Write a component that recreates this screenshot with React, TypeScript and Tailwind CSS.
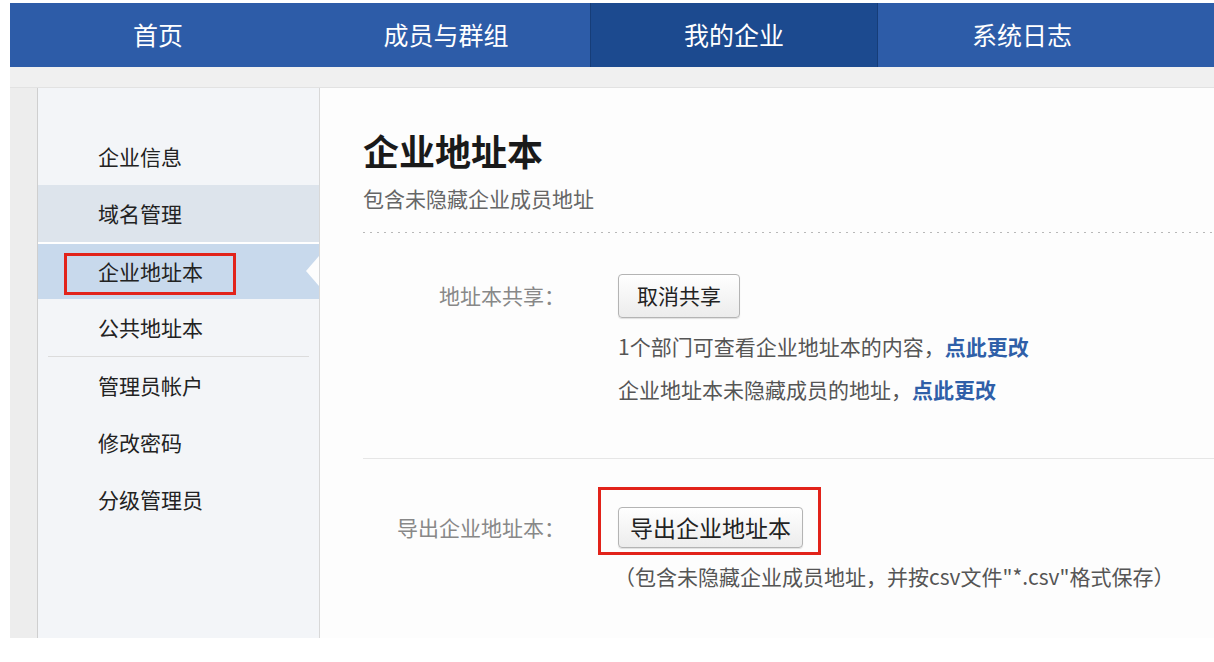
import React from "react"

const font = { fontFamily: '"Noto Sans CJK SC", "Noto Sans", sans-serif' }

const tabs = ["首页", "成员与群组", "我的企业", "系统日志"]

function SideItem({
    label,
    variant,
}: {
    label: string
    variant?: "hover" | "active"
}) {
    if (variant === "active") {
        return (
            <div className="relative h-[55px] flex items-center pl-[60px] bg-[#c8d9ec] text-[21px] text-[#222]">
                {label}
                {/* red annotation box */}
                <div className="absolute left-[26px] top-[9px] w-[172px] h-[42px] border-[3px] border-[#e2231a]" />
                {/* notch */}
                <div className="absolute right-0 top-[12px] w-0 h-0 border-y-[15px] border-y-transparent border-r-[13px] border-r-[#fdfdfd]" />
            </div>
        )
    }
    return (
        <div
            className={`h-[57px] flex items-center pl-[60px] text-[21px] text-[#222] ${
                variant === "hover" ? "bg-[#dde4ec]" : ""
            }`}
        >
            {label}
        </div>
    )
}

function Button({ children, size }: { children: React.ReactNode; size: "sm" | "lg" }) {
    return (
        <button
            className={`rounded-[4px] border border-[#b4b4b4] bg-[linear-gradient(#ffffff,#ececec)] shadow-[0_1px_1px_rgba(0,0,0,0.12)] text-[#222] flex items-center justify-center ${
                size === "sm" ? "w-[122px] h-[44px] text-[21px]" : "w-[185px] h-[41px] text-[23px]"
            }`}
        >
            {children}
        </button>
    )
}

export default function App() {
    return (
        <div className="w-[1214px] h-[662px] bg-white pl-[10px] overflow-hidden" style={font}>
            <div className="h-[3px] bg-white" />
            <div className="flex flex-col bg-[#ededed] h-[635px]">
                {/* top nav */}
                <div className="h-[64px] bg-[#2d5ca8] flex pl-[4px]">
                    {tabs.map((t, i) => (
                        <div
                            key={t}
                            className={`w-[288px] flex items-center justify-center text-[25px] text-white ${
                                i === 2 ? "bg-[#1c4a8f] border-x border-[#163d78]" : ""
                            }`}
                        >
                            {t}
                        </div>
                    ))}
                </div>
                <div className="h-[21px] bg-[#f0f0f0] border-b border-[#e2e2e2]" />

                <div className="flex flex-1 pl-[27px]">
                    {/* sidebar */}
                    <div className="w-[283px] bg-[#f3f5f8] border-l border-[#cfcfcf] border-r border-r-[#d8d8d8] pt-[40px] flex flex-col">
                        <SideItem label="企业信息" />
                        <SideItem label="域名管理" variant="hover" />
                        <div className="h-[2px] bg-white" />
                        <SideItem label="企业地址本" variant="active" />
                        <SideItem label="公共地址本" />
                        <div className="mx-[10px] h-px bg-[#dcdcdc]" />
                        <SideItem label="管理员帐户" />
                        <SideItem label="修改密码" />
                        <SideItem label="分级管理员" />
                    </div>

                    {/* main */}
                    <div className="flex-1 bg-[#fdfdfd] flex flex-col pt-[43px]">
                        <div className="pl-[43px]">
                            <div className="text-[36px] leading-[38px] font-bold text-[#1a1a1a]">企业地址本</div>
                            <div className="mt-[16px] text-[21px] leading-[26px] text-[#666]">包含未隐藏企业成员地址</div>
                            <div className="mt-[21px] h-px bg-[repeating-linear-gradient(to_right,#b8b8b8_0_2px,transparent_2px_7px)]" />
                        </div>

                        {/* share row */}
                        <div className="flex mt-[41px]">
                            <div className="w-[245px] h-[44px] flex items-center justify-end text-[21px] text-[#888]">
                                地址本共享：
                            </div>
                            <div className="ml-[53px] flex flex-col">
                                <Button size="sm">取消共享</Button>
                                <div className="mt-[7px] text-[21px] leading-[43px] text-[#555]">
                                    1个部门可查看企业地址本的内容，
                                    <a className="font-bold text-[#2f5fa8]">点此更改</a>
                                </div>
                                <div className="text-[21px] leading-[43px] text-[#555]">
                                    企业地址本未隐藏成员的地址，
                                    <a className="font-bold text-[#2f5fa8]">点此更改</a>
                                </div>
                            </div>
                        </div>

                        <div className="ml-[43px] mt-[47px] h-px bg-[#e6e6e6]" />

                        {/* export row */}
                        <div className="flex mt-[48px]">
                            <div className="w-[245px] h-[41px] flex items-center justify-end text-[21px] text-[#888]">
                                导出企业地址本：
                            </div>
                            <div className="ml-[53px] flex flex-col">
                                <div className="relative">
                                    <Button size="lg">导出企业地址本</Button>
                                    <div className="absolute -left-[20px] -top-[20px] w-[223px] h-[68px] border-[3px] border-[#e2231a]" />
                                </div>
                                <div className="mt-[14px] -ml-[4px] text-[21px] leading-[28px] text-[#555]">
                                    （包含未隐藏企业成员地址，并按csv文件"*.csv"格式保存）
                                </div>
                            </div>
                        </div>
                    </div>
                </div>
            </div>
        </div>
    )
}
